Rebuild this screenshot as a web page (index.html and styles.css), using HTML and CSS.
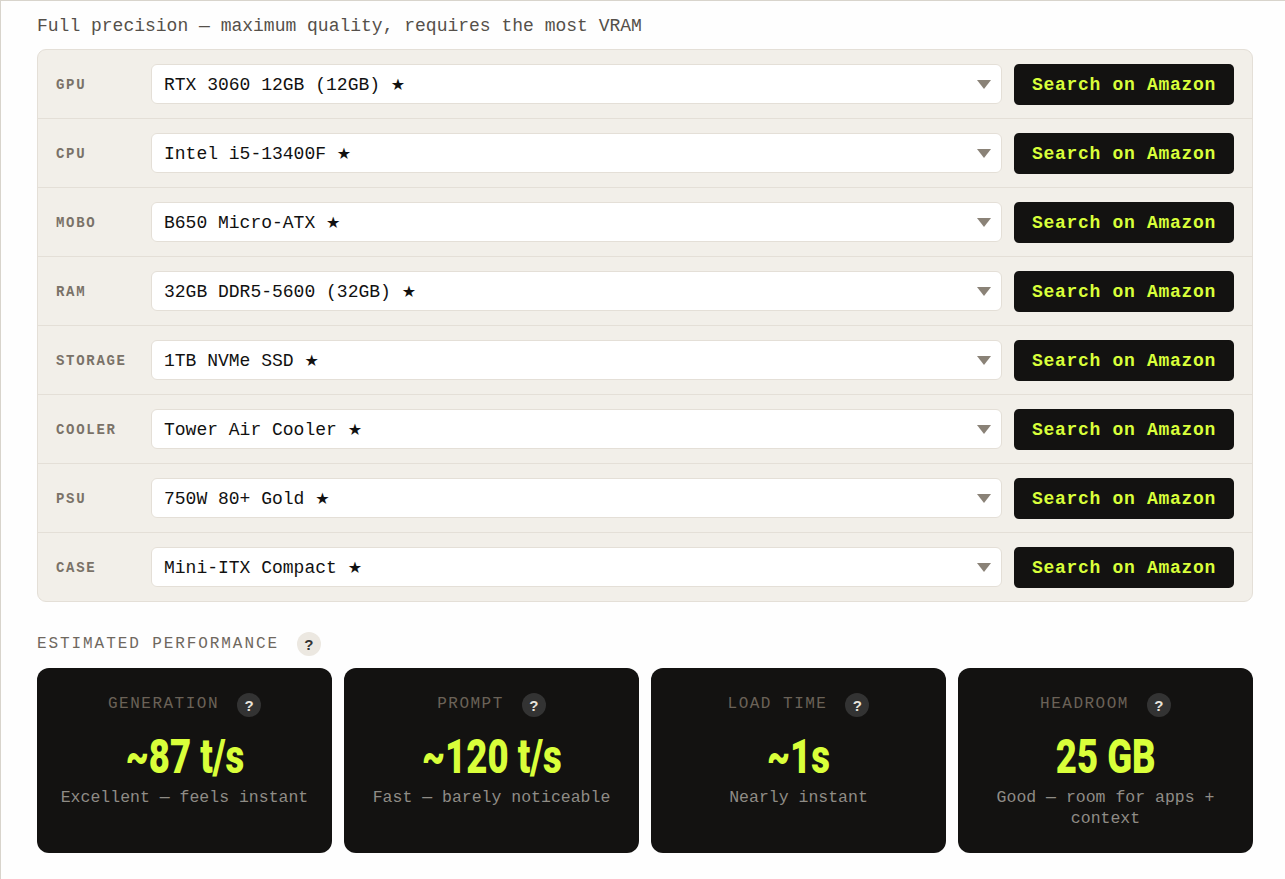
FILE: index.html
```html
<!DOCTYPE html>
<html lang="en"><head><meta charset="utf-8"><title>Estimate</title><link rel="stylesheet" href="styles.css"></head>
<body>
<main class="page">
<p class="intro">Full precision — maximum quality, requires the most VRAM</p>
<section class="parts">
<div class="row"><span class="label">GPU</span><div class="select"><span class="choice">RTX 3060 12GB (12GB) <span class="star">★</span></span><i class="arrow"></i></div><a class="buy">Search on Amazon</a></div>
<div class="row"><span class="label">CPU</span><div class="select"><span class="choice">Intel i5-13400F <span class="star">★</span></span><i class="arrow"></i></div><a class="buy">Search on Amazon</a></div>
<div class="row"><span class="label">MOBO</span><div class="select"><span class="choice">B650 Micro-ATX <span class="star">★</span></span><i class="arrow"></i></div><a class="buy">Search on Amazon</a></div>
<div class="row"><span class="label">RAM</span><div class="select"><span class="choice">32GB DDR5-5600 (32GB) <span class="star">★</span></span><i class="arrow"></i></div><a class="buy">Search on Amazon</a></div>
<div class="row"><span class="label">STORAGE</span><div class="select"><span class="choice">1TB NVMe SSD <span class="star">★</span></span><i class="arrow"></i></div><a class="buy">Search on Amazon</a></div>
<div class="row"><span class="label">COOLER</span><div class="select"><span class="choice">Tower Air Cooler <span class="star">★</span></span><i class="arrow"></i></div><a class="buy">Search on Amazon</a></div>
<div class="row"><span class="label">PSU</span><div class="select"><span class="choice">750W 80+ Gold <span class="star">★</span></span><i class="arrow"></i></div><a class="buy">Search on Amazon</a></div>
<div class="row"><span class="label">CASE</span><div class="select"><span class="choice">Mini-ITX Compact <span class="star">★</span></span><i class="arrow"></i></div><a class="buy">Search on Amazon</a></div>
</section>
<h2 class="perf-title">ESTIMATED PERFORMANCE <b class="help">?</b></h2>
<section class="cards">
<article class="card"><h3 class="card-title">GENERATION <b class="help dark">?</b></h3><div class="value"><span class="value-text">~87 t/s</span></div><p class="note">Excellent — feels instant</p></article>
<article class="card"><h3 class="card-title">PROMPT <b class="help dark">?</b></h3><div class="value"><span class="value-text">~120 t/s</span></div><p class="note">Fast — barely noticeable</p></article>
<article class="card"><h3 class="card-title">LOAD TIME <b class="help dark">?</b></h3><div class="value"><span class="value-text">~1s</span></div><p class="note">Nearly instant</p></article>
<article class="card"><h3 class="card-title">HEADROOM <b class="help dark">?</b></h3><div class="value"><span class="value-text">25 GB</span></div><p class="note">Good — room for apps + context</p></article>
</section>
</main>
</body></html>
```
FILE: styles.css
```css
* { box-sizing: border-box; }
html, body { margin: 0; height: 879px; overflow: hidden; }
body { background: #fefefe; border-left: 1px solid #d8d4cc; border-top: 1px solid #d8d4cc; font-family: "Liberation Mono", monospace; color: #111; }
.page { padding: 14px 32px 0 36px; }
.intro { margin: 0 0 12px; font-size: 18px; line-height: 22px; color: #55504a; }
.parts { background: #f2efe9; border: 1px solid #e4dfd7; border-radius: 9px; overflow: hidden; }
.row { display: flex; align-items: center; height: 69px; padding: 0 18px; border-bottom: 1px solid #e4dfd7; }
.row:last-child { border-bottom: 0; height: 68px; }
.label { width: 95px; flex: none; padding-top: 2px; font-size: 14px; font-weight: 700; letter-spacing: 1.7px; color: #7a7268; }
.select { flex: 1; height: 40px; display: flex; align-items: center; justify-content: space-between; padding: 0 10px 0 12px; background: #fff; border: 1px solid #e4dfd7; border-radius: 6px; font-size: 18px; }
.choice { padding-top: 2px; }
.star { font-family: "DejaVu Sans", sans-serif; font-size: 16px; line-height: 1; }
.arrow { width: 0; height: 0; border-left: 7px solid transparent; border-right: 7px solid transparent; border-top: 9px solid #8a8277; }
.buy { flex: none; width: 220px; height: 41px; margin-left: 12px; padding-top: 2px; display: flex; align-items: center; justify-content: center; background: #131211; border-radius: 5px; color: #d9ff3a; font-size: 18px; font-weight: 700; letter-spacing: .7px; }
.perf-title { display: flex; align-items: center; margin: 30px 0 12px; height: 24px; font-size: 16px; font-weight: 400; letter-spacing: 1.92px; color: #6f685e; white-space: nowrap; }
.help { display: inline-flex; align-items: center; justify-content: center; width: 24px; height: 24px; margin-left: 18px; border-radius: 50%; background: #ece8e1; color: #333; font-family: "Liberation Sans", sans-serif; font-size: 15px; font-weight: 700; letter-spacing: 0; }
.help.dark { margin-top: 2px; background: #333; color: #e8e4dc; }
.cards { display: grid; grid-template-columns: repeat(4, 1fr); gap: 12px; }
.card { height: 185px; padding: 24px 20px 0; background: #131211; border-radius: 12px; text-align: center; }
.card-title { display: flex; align-items: center; justify-content: center; margin: 0; height: 24px; font-size: 16px; font-weight: 400; letter-spacing: 1.5px; color: #6b6258; }
.value { margin-top: 17px; font-family: "Roboto", sans-serif; font-size: 48px; line-height: 48px; font-weight: 900; color: #d9ff3a; white-space: nowrap; }
.value-text { display: inline-block; transform: scaleX(.76); }
.note { margin: 6px 0 0; font-size: 16.5px; line-height: 21px; color: #8f8c86; }
```
